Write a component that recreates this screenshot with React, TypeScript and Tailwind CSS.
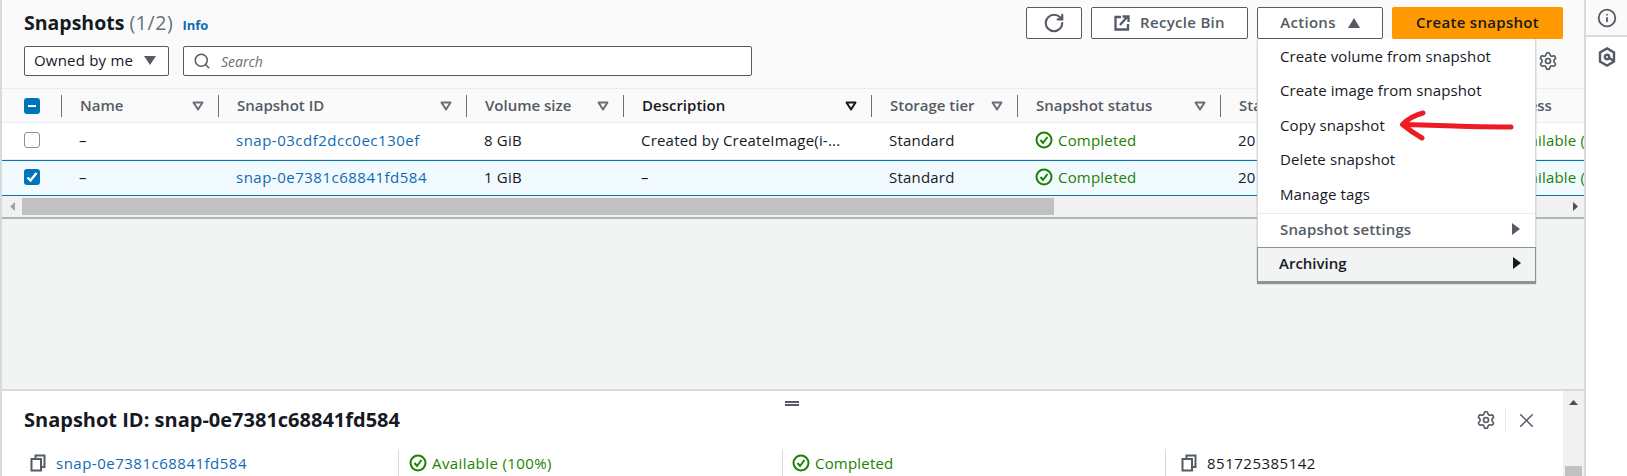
import { ReactNode } from 'react';
import { Info, RotateCw, Search, Settings, X } from 'lucide-react';

const FONT = 'font-["Open_Sans",sans-serif]';

const COLS = [
  'w-[59px]',
  'w-[157px]',
  'w-[248px]',
  'w-[157px]',
  'w-[248px]',
  'w-[146px]',
  'w-[203px]',
  'w-[251px]',
  'w-[114px]',
];

function SortCaret({ dark }: { dark?: boolean }) {
  return (
    <svg width="12" height="10" viewBox="0 0 12 10" className={dark ? 'text-[#16191f]' : 'text-[#687078]'}>
      <path d="M1.5 1.5h9L6 8.5z" fill="none" stroke="currentColor" strokeWidth="2" strokeLinejoin="round" />
    </svg>
  );
}

function StatusIcon() {
  return (
    <svg width="18" height="18" viewBox="0 0 18 18" className="shrink-0 text-[#1d8102]" fill="none" stroke="currentColor" strokeWidth="2">
      <circle cx="9" cy="9" r="7.5" />
      <path d="M5.5 9l2.5 3 4.5-6" />
    </svg>
  );
}

function CopyIcon() {
  return (
    <svg width="16" height="18" viewBox="0 0 16 18" className="shrink-0 text-[#545b64]" fill="none" stroke="currentColor" strokeWidth="2">
      <path d="M5.5 4V1.5h9V13h-3" />
      <rect x="1.5" y="5" width="9.5" height="11.5" />
    </svg>
  );
}

function HeaderCell({ col, label, dark, caret = true, sep = true }: { col: number; label: string; dark?: boolean; caret?: boolean; sep?: boolean }) {
  return (
    <div className={`${COLS[col]} h-[22px] shrink-0 flex items-center justify-between pl-[18px] pr-[14px] ${sep ? 'border-l border-[#687078]' : ''}`}>
      <span className={`text-[15px] font-semibold whitespace-nowrap pb-[1px] ${dark ? 'text-[#16191f]' : 'text-[#545b64]'}`}>{label}</span>
      {caret && <SortCaret dark={dark} />}
    </div>
  );
}

function Cell({ col, children }: { col: number; children: ReactNode }) {
  return (
    <div className={`${COLS[col]} shrink-0 flex items-center gap-[5px] pl-[18px] text-[15px] tracking-[0.2px] text-[#16191f] whitespace-nowrap overflow-hidden`}>
      {children}
    </div>
  );
}

function TableRow({ id, size, desc, selected }: { id: string; size: string; desc: string; selected?: boolean }) {
  return (
    <div className={`flex w-full pb-[2px] border-b ${selected ? 'h-[36px] bg-[#f1faff] border-y border-[#0073bb]' : 'h-[37px] bg-white border-[#eaeded]'}`}>
      <div className={`${COLS[0]} shrink-0 flex items-center pl-[22px]`}>
        {selected ? (
          <div className="w-[16px] h-[16px] rounded-[3px] bg-[#0073bb] flex items-center justify-center">
            <svg width="12" height="12" viewBox="0 0 12 12" fill="none" stroke="white" strokeWidth="2.4"><path d="M1.5 6.5l3 3 6-7.5" /></svg>
          </div>
        ) : (
          <div className="w-[16px] h-[16px] rounded-[3px] bg-white border border-[#879596]" />
        )}
      </div>
      <Cell col={1}>–</Cell>
      <Cell col={2}><span className="text-[#0f6ab4] tracking-[0.5px]">{id}</span></Cell>
      <Cell col={3}>{size}</Cell>
      <Cell col={4}>{desc}</Cell>
      <Cell col={5}>Standard</Cell>
      <Cell col={6}><StatusIcon /><span className="text-[#1d8102]">Completed</span></Cell>
      <Cell col={7}>20</Cell>
      <Cell col={8}><StatusIcon /><span className="text-[#1d8102]">Available (100%)</span></Cell>
    </div>
  );
}

function MenuItem({ children }: { children: ReactNode }) {
  return <div className="h-[34.6px] flex items-center pl-[22px] pb-[3px] text-[15px] tracking-[0.1px] text-[#16191f]">{children}</div>;
}

function Caret({ className }: { className: string }) {
  return (
    <svg width="10" height="12" viewBox="0 0 10 12" className={className} fill="currentColor">
      <path d="M1 0l8 6-8 6z" />
    </svg>
  );
}

export default function App() {
  return (
    <div className={`${FONT} flex w-[1627px] h-[476px] overflow-hidden bg-white`}>
      <div className="relative w-[1584px] shrink-0 h-full flex flex-col border-l-2 border-[#d5dbdb] bg-[#f2f3f3]">
        {/* Header with buttons and filter */}
        <div className="bg-[#fafafa] h-[88px] shrink-0 pt-[7px] pl-[22px] pr-[21px] flex flex-col gap-[7px]">
          <div className="flex justify-between items-center h-[32px]">
            <div className="flex items-baseline gap-[9px]">
              <h1 className="text-[19.5px] font-bold text-[#16191f]">
                Snapshots <span className="font-normal text-[#687078] tracking-[0.6px]">(1/2)</span>
              </h1>
              <span className="text-[13px] font-bold text-[#0f6ab4]">Info</span>
            </div>
            <div className="flex gap-[9px] text-[15px] font-semibold tracking-[0.3px]">
              <button className="w-[56px] h-[32px] border border-[#545b64] rounded-[2px] bg-white flex items-center justify-center text-[#545b64]">
                <RotateCw size={22} strokeWidth={2.3} />
              </button>
              <button className="w-[157px] h-[32px] border border-[#545b64] rounded-[2px] bg-white flex items-center justify-center gap-[10px] pb-[1px] text-[#545b64]">
                <svg width="16" height="16" viewBox="0 0 16 16" fill="none" stroke="currentColor" strokeWidth="2.3">
                  <path d="M7 2H1.5v12.5H14V9" />
                  <path d="M6 10l7.5-8.5M8.5 1.5H14.5V7" />
                </svg>
                Recycle Bin
              </button>
              <button className="w-[126px] h-[32px] border border-[#545b64] rounded-[2px] bg-white flex items-center justify-center gap-[12px] pb-[1px] text-[#545b64]">
                Actions
                <svg width="12" height="10" viewBox="0 0 12 10" fill="currentColor"><path d="M6 0l6 10H0z" /></svg>
              </button>
              <button className="w-[171px] h-[32px] rounded-[2px] bg-[#ff9900] flex items-center justify-center pb-[1px] text-[#16191f]">
                Create snapshot
              </button>
            </div>
          </div>
          <div className="flex items-center h-[30px] gap-[14px]">
            <div className="w-[145px] h-[30px] border border-[#545b64] rounded-[2px] bg-white flex items-center justify-between pl-[9px] pr-[12px] pb-[1px] text-[15px] tracking-[0.2px] text-[#16191f]">
              Owned by me
              <svg width="12" height="9" viewBox="0 0 12 9" fill="#545b64"><path d="M0 0h12L6 9z" /></svg>
            </div>
            <div className="w-[569px] h-[30px] border border-[#545b64] rounded-[2px] bg-white flex items-center gap-[10px] pl-[9px] text-[14px] italic text-[#687078]">
              <Search size={18} strokeWidth={2} className="text-[#545b64]" />
              Search
            </div>
            <div className="flex-1 flex justify-end pr-[5px]">
              <Settings size={20} strokeWidth={2} className="text-[#545b64]" />
            </div>
          </div>
        </div>

        {/* Snapshots table */}
        <div className="w-full overflow-hidden shrink-0 border-t border-[#eaeded]">
          <div className="flex items-center h-[34px] bg-[#fafafa] border-b border-[#eaeded]">
            <div className={`${COLS[0]} shrink-0 flex items-center pl-[22px]`}>
              <div className="w-[16px] h-[16px] rounded-[3px] bg-[#0073bb] flex items-center justify-center">
                <div className="w-[8px] h-[2px] bg-white" />
              </div>
            </div>
            <HeaderCell col={1} label="Name" />
            <HeaderCell col={2} label="Snapshot ID" />
            <HeaderCell col={3} label="Volume size" />
            <HeaderCell col={4} label="Description" dark />
            <HeaderCell col={5} label="Storage tier" />
            <HeaderCell col={6} label="Snapshot status" />
            <HeaderCell col={7} label="Started" />
            <HeaderCell col={8} label="Progress" sep={false} caret={false} />
          </div>
          <TableRow id="snap-03cdf2dcc0ec130ef" size="8 GiB" desc="Created by CreateImage(i-..." />
          <TableRow id="snap-0e7381c68841fd584" size="1 GiB" desc="–" selected />
        </div>

        {/* Horizontal scrollbar */}
        <div className="h-[23px] shrink-0 bg-[#f1f1f1] border-b-2 border-[#aab7b8] flex items-center">
          <div className="w-[20px] flex justify-center">
            <svg width="5" height="9" viewBox="0 0 5 9" fill="#a3a3a3"><path d="M5 0v9L0 4.5z" /></svg>
          </div>
          <div className="w-[1032px] h-[17px] bg-[#c1c1c1]" />
          <div className="flex-1 flex justify-end pr-[6px]">
            <svg width="5" height="9" viewBox="0 0 5 9" fill="#505050"><path d="M0 0v9l5-4.5z" /></svg>
          </div>
        </div>

        <div className="flex-1" />

        {/* Split panel */}
        <div className="h-[87px] shrink-0 bg-white border-t-2 border-[#d5dbdb] flex">
          <div className="flex-1 flex flex-col relative">
            <div className="absolute top-[10px] left-[783px] w-[14px] h-[5px] border-y-2 border-[#545b64]" />
            <div className="h-[58px] shrink-0 flex items-center justify-between pl-[22px] pr-[25px]">
              <h2 className="text-[20px] font-bold text-[#16191f]">Snapshot ID: snap-0e7381c68841fd584</h2>
              <div className="flex items-center">
                <Settings size={20} strokeWidth={2} className="text-[#545b64] mr-[9px]" />
                <div className="border-l border-[#eaeded] pl-[9px] h-[26px] flex items-center">
                  <X size={23} strokeWidth={1.6} className="text-[#545b64]" />
                </div>
              </div>
            </div>
            <div className="flex text-[15px] tracking-[0.5px] h-[27px]">
              <div className="w-[396px] shrink-0 flex items-start gap-[10px] pl-[28px] pt-[5px]">
                <CopyIcon />
                <span className="text-[#0f6ab4] -mt-[2px]">snap-0e7381c68841fd584</span>
              </div>
              <div className="w-[384px] shrink-0 border-l border-[#d5dbdb] flex items-start gap-[5px] pl-[10px] pt-[5px]">
                <StatusIcon />
                <span className="text-[#1d8102] tracking-[0.4px] -mt-[2px]">Available (100%)</span>
              </div>
              <div className="w-[383px] shrink-0 border-l border-[#d5dbdb] flex items-start gap-[5px] pl-[9px] pt-[5px]">
                <StatusIcon />
                <span className="text-[#1d8102] tracking-[0.2px] -mt-[2px]">Completed</span>
              </div>
              <div className="flex-1 border-l border-[#d5dbdb] flex items-start gap-[10px] pl-[15px] pt-[5px]">
                <CopyIcon />
                <span className="text-[#16191f] -mt-[2px]">851725385142</span>
              </div>
            </div>
          </div>
          <div className="w-[21px] shrink-0 bg-[#f1f1f1] flex flex-col items-center pt-[9px] gap-[61px]">
            <svg width="9" height="5" viewBox="0 0 9 5" fill="#505050"><path d="M4.5 0L9 5H0z" /></svg>
            <div className="w-[17px] h-[10px] bg-[#c1c1c1]" />
          </div>
        </div>

        {/* Actions dropdown */}
        <div className="absolute top-[39px] left-[1255px] w-[279px] h-[243px] bg-white border-l border-r border-[#d5dbdb] shadow-[0_2px_1px_0_#879596] flex flex-col">
          <div className="pt-[1px]">
            <MenuItem>Create volume from snapshot</MenuItem>
            <MenuItem>Create image from snapshot</MenuItem>
            <MenuItem>Copy snapshot</MenuItem>
            <MenuItem>Delete snapshot</MenuItem>
            <MenuItem>Manage tags</MenuItem>
          </div>
          <div className="h-[34px] border-t border-[#eaeded] flex items-center justify-between pl-[22px] pr-[14px] pb-[2px] text-[15px] font-semibold tracking-[0.15px] text-[#545b64]">
            Snapshot settings
            <Caret className="text-[#545b64]" />
          </div>
          <div className="flex-1 border border-[#879596] bg-[#f2f3f3] flex items-center justify-between pl-[21px] pr-[13px] pb-[2px] -mx-px text-[15px] font-semibold text-[#16191f]">
            Archiving
            <Caret className="text-[#16191f]" />
          </div>
        </div>

        {/* Hand-drawn annotation arrow */}
        <svg width="116" height="34" viewBox="0 0 116 34" className="absolute left-[1397px] top-[109px]" fill="none" stroke="#ed1c24" strokeWidth="5" strokeLinecap="round" strokeLinejoin="round">
          <path d="M112 18C85 18 50 17 5 15.5" />
          <path d="M24 4C16 6 9 10 3.5 15.5C9 20 16 25 23 29" />
        </svg>
      </div>

      {/* Right rail */}
      <div className="flex-1 border-l-2 border-[#d5dbdb] bg-white flex flex-col">
        <div className="h-[37px] bg-[#fafafa] border-b-2 border-[#d5dbdb] flex items-center justify-center">
          <Info size={20} strokeWidth={2.2} className="text-[#545b64]" />
        </div>
        <div className="flex justify-center pt-[10px]">
          <svg width="18" height="20" viewBox="0 0 18 20" fill="none" stroke="#545b64" strokeWidth="2.4">
            <path d="M9 1.4l7 4v9.2l-7 4-7-4V5.4z" />
            <circle cx="9" cy="10" r="2.2" />
            <path d="M10.5 10.5l5.5 3.5" />
          </svg>
        </div>
      </div>
    </div>
  );
}
